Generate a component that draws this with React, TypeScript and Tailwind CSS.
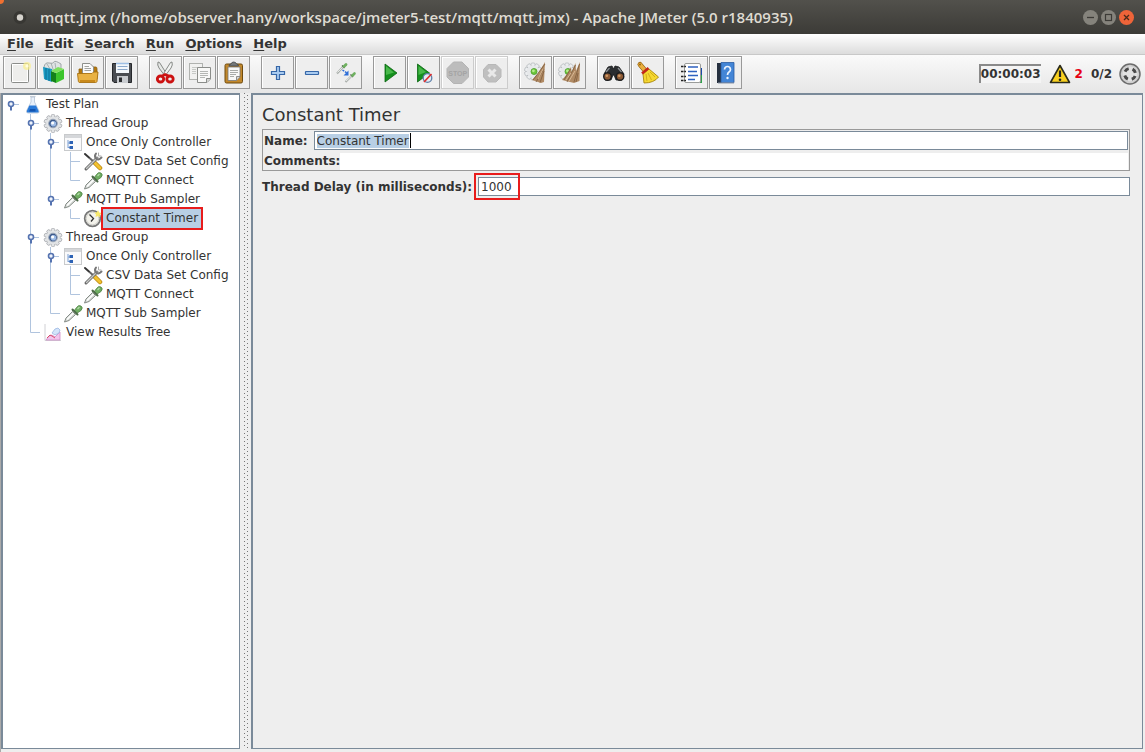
import React, { useEffect, useRef, useState } from "react";

type TreeIconName =
  | "plan"
  | "group"
  | "controller"
  | "config"
  | "dropper"
  | "timer"
  | "results";

// "line" passes through, "branch" and "end" join a leaf, the handles fold a node
type Guide = "none" | "line" | "branch" | "end" | "handle" | "handleLine" | "root";

interface TreeRow {
  id: number;
  label: string;
  icon: TreeIconName;
  guides: Guide[];
  marked?: boolean;
}

const menus = ["File", "Edit", "Search", "Run", "Options", "Help"];

const treeRows: TreeRow[] = [
  { id: 1, label: "Test Plan", icon: "plan", guides: ["root"] },
  { id: 2, label: "Thread Group", icon: "group", guides: ["none", "handleLine"] },
  { id: 3, label: "Once Only Controller", icon: "controller", guides: ["none", "line", "handleLine"] },
  { id: 4, label: "CSV Data Set Config", icon: "config", guides: ["none", "line", "line", "branch"] },
  { id: 5, label: "MQTT Connect", icon: "dropper", guides: ["none", "line", "line", "end"] },
  { id: 6, label: "MQTT Pub Sampler", icon: "dropper", guides: ["none", "line", "handle"] },
  { id: 7, label: "Constant Timer", icon: "timer", guides: ["none", "line", "none", "end"], marked: true },
  { id: 8, label: "Thread Group", icon: "group", guides: ["none", "handleLine"] },
  { id: 9, label: "Once Only Controller", icon: "controller", guides: ["none", "line", "handleLine"] },
  { id: 10, label: "CSV Data Set Config", icon: "config", guides: ["none", "line", "line", "branch"] },
  { id: 11, label: "MQTT Connect", icon: "dropper", guides: ["none", "line", "line", "end"] },
  { id: 12, label: "MQTT Sub Sampler", icon: "dropper", guides: ["none", "line", "end"] },
  { id: 13, label: "View Results Tree", icon: "results", guides: ["none", "end"] },
];

const GuideCell: React.FC<{ kind: Guide }> = ({ kind }) => {
  const hasHandle = kind === "handle" || kind === "handleLine" || kind === "root";
  return (
    <svg className="h-[19px] w-5 shrink-0" viewBox="0 0 20 19" aria-hidden="true">
      <g stroke="#b0c4de" strokeWidth="1" fill="none">
        {(kind === "line" || kind === "branch" || kind === "handleLine") && (
          <path d="M7.5 0V19" />
        )}
        {(kind === "end" || kind === "handle") && <path d="M7.5 0V9.5" />}
        {(kind === "branch" || kind === "end") && <path d="M7.5 9.5H17" />}
        {hasHandle && <path d="M10 9.5H16" />}
      </g>
      {hasHandle && (
        <g>
          <path d="M8 11V15.500" stroke="#5573b0" strokeWidth="2" />
          <circle cx="8" cy="9" r="2.5" fill="#eef3fb" stroke="#5573b0" strokeWidth="1.6" />
        </g>
      )}
    </svg>
  );
};

const Dropper = () => (
  <g>
    <path d="M1.500 18 3 14 9.500 7.500 12.500 10.500 6 16.500Z" fill="#d9ddd9" stroke="#858b86" strokeWidth="1" />
    <path d="M4 15.500 10.500 9" stroke="#fff" strokeWidth="1.400" />
    <path d="M11 7 13.500 3.500Q15.500 .5 18 2T18 6.500L13.500 9.500Z" fill="#6fae62" stroke="#4f8246" strokeWidth=".8" />
    <path d="M9.500 5.500 14.500 10.500" stroke="#4c6a47" strokeWidth="2" strokeLinecap="round" />
    <path d="M14.500 5 16.500 3" stroke="#b4dca8" strokeWidth="1.200" />
  </g>
);

const gearTeeth = [0, 36, 72, 108, 144, 180, 216, 252, 288, 324];

const treeIcons: Record<TreeIconName, React.ReactNode> = {
  plan: (
    <g>
      <path d="M8 2V7L3.500 16Q3.200 18 5 18H14.500Q16.500 18 16 16L11.500 7V2Z" fill="#e8f0fa" stroke="#b4c2d4" strokeWidth=".8" />
      <path d="M6.300 10.500 3.800 16Q3.500 17.600 5 17.600H14.500Q16 17.600 15.600 16L13 10.500Z" fill="#2a7ad8" />
      <path d="M7 14H12.500V16.500H6Z" fill="#1254b0" />
      <path d="M7 1.500H12.500" stroke="#c2cbd6" strokeWidth="1.200" />
    </g>
  ),
  group: (
    <g>
      {gearTeeth.map((deg) => (
        <rect key={deg} x="8.300" y=".5" width="3.400" height="4" rx="1" fill="#e2e4e6" stroke="#a0a3a8" strokeWidth=".7" transform={`rotate(${deg} 10 9.5)`} />
      ))}
      <circle cx="10" cy="9.500" r="6.800" fill="#e2e4e6" />
      <circle cx="10" cy="9.500" r="4.300" fill="#3d5a8c" stroke="#9aa6b8" strokeWidth="1" />
      <circle cx="10.400" cy="9.800" r="2.800" fill="#9dbbe6" />
      <circle cx="9.600" cy="9" r="1.500" fill="#fff" />
    </g>
  ),
  controller: (
    <g>
      <rect x="1.500" y="1.500" width="17" height="16" fill="#fafafb" stroke="#c8cacc" />
      <rect x="2" y="2" width="16" height="3" fill="#d5d7da" />
      <path d="M5 7V15M5 10H7M5 14.500H7" stroke="#7ba0d4" strokeWidth="1" />
      <rect x="6.500" y="8" width="3.500" height="3" fill="#2c62b5" />
      <rect x="6.500" y="13" width="3.500" height="3" fill="#2c62b5" />
    </g>
  ),
  config: (
    <g fill="none" strokeLinecap="round">
      <path d="M2 2 11 10" stroke="#666" strokeWidth="2" />
      <path d="M2 2 6 5.500" stroke="#333" strokeWidth="1.500" />
      <path d="M11.500 10.500 17 16" stroke="#b88510" strokeWidth="4.500" />
      <path d="M11.500 10.500 17 16" stroke="#f2c230" strokeWidth="3" />
      <path d="M3 17 14 6" stroke="#666" strokeWidth="3" />
      <path d="M3.500 16.500 14 6" stroke="#c8cac8" strokeWidth="1.400" />
      <path d="M13 1.500Q11 4 13 6.500T18.500 5.500" stroke="#777" strokeWidth="2" />
      <path d="M15.500 1V4H18" stroke="#aaa" strokeWidth="1" />
    </g>
  ),
  dropper: <Dropper />,
  timer: (
    <g>
      <circle cx="9.500" cy="9.500" r="7.800" fill="#f4f3ec" stroke="#777" strokeWidth="1.800" />
      <circle cx="9.500" cy="9.500" r="6.300" fill="none" stroke="#cfcfca" strokeWidth="1" />
      <path d="M6.500 5.500 10.500 9.500 8 12.500" fill="none" stroke="#333" strokeWidth="1.300" />
      <path d="M15 1 16.200 3.500 19 4 16.800 6 17 8.500 15 7 12.500 8 13 5.500 11.500 3.500 14 3.300Z" fill="#f8e86a" />
    </g>
  ),
  results: (
    <g>
      <path d="M2 1V17.500H18" fill="none" stroke="#d0d0d4" strokeWidth="1" />
      <path d="M3 17 6 13 9 12 12 14 17 9V17Z" fill="#f2c4ec" stroke="#d08ac8" strokeWidth=".8" />
      <path d="M9 10 12 6 15 5 17 7 16 10 12 12Z" fill="#d4e4fa" stroke="#9ab8e2" strokeWidth=".8" />
      <path d="M4 15 7 12 9 13 12 15" fill="none" stroke="#d8324a" strokeWidth=".8" />
    </g>
  ),
};

const Gear = () => (
  <g>
    {gearTeeth.map((deg) => (
      <rect key={deg} x="11" y="6" width="4" height="4" rx="1" fill="#eceef0" stroke="#b0b4b8" strokeWidth=".7" transform={`rotate(${deg} 13 14.500)`} />
    ))}
    <circle cx="13" cy="14.500" r="6.300" fill="#e6e8ea" />
    <circle cx="14" cy="14.500" r="3" fill="#6cc83c" stroke="#4a9a28" strokeWidth=".8" />
    <circle cx="13.400" cy="13.800" r="1.400" fill="#b4ec8c" />
  </g>
);

interface Tool {
  label: string;
  disabled?: boolean;
  icon: React.ReactNode;
}

const toolGroups: Tool[][] = [
  [
    {
      label: "New",
      icon: (
        <g>
          <rect x="7.500" y="6.500" width="17" height="19" rx="1" fill="#f6f6f5" stroke="#8b8d8a" />
          <rect x="8.500" y="7.500" width="15" height="17" fill="#eeeeec" stroke="#fff" />
          <circle cx="23" cy="9" r="4" fill="#fbf08c" opacity=".7" />
          <circle cx="23" cy="9" r="1.600" fill="#fffde0" />
        </g>
      ),
    },
    {
      label: "Templates",
      icon: (
        <g>
          <path d="M6 10Q7 5 11 6T16 5 23 7V13H7Z" fill="#dfe3e4" stroke="#8e9698" strokeWidth=".8" />
          <path d="M9 7 12 12M13 6 15 12M17 6 18 12" stroke="#9aa4a6" strokeWidth=".8" />
          <path d="M5 10 14 12V25L6 22Z" fill="#1b9bc4" />
          <path d="M8 11V23M11 12V24" stroke="#0d6f94" strokeWidth="1" />
          <path d="M13 14 18 16V26L13 24Z" fill="#14801c" />
          <path d="M18 16 26 12V22L18 26Z" fill="#3cc52c" />
          <path d="M13 14 20 10 26 12 18 16Z" fill="#7ce05c" />
        </g>
      ),
    },
    {
      label: "Open",
      icon: (
        <g>
          <path d="M7 12H11L12 10H24Q25 10 25 12V22H7Z" fill="#b3780f" stroke="#8f5f0c" strokeWidth=".8" />
          <path d="M10.500 6.500H18L21.500 10V18H10.500Z" fill="#fafafa" stroke="#8d8f8b" />
          <path d="M12.500 9.500H17M12.500 11.500H19M12.500 13.500H19" stroke="#a3a5a2" />
          <path d="M5.500 16.500H20L21.500 15H26L25 24.500Q24.800 25.500 23.500 25.500H8Q6.500 25.500 6.400 24.500Z" fill="#e9b244" stroke="#a87010" strokeWidth=".9" />
          <path d="M8 24H23" stroke="#c98a1c" strokeWidth="2" />
        </g>
      ),
    },
    {
      label: "Save",
      icon: (
        <g>
          <path d="M6.500 6.500H25.500V25.500H8L6.500 24Z" fill="#4a4d52" stroke="#26282b" />
          <rect x="10" y="6" width="13" height="10" fill="#f3f7fb" />
          <path d="M10 6.500H23" stroke="#9fc0e6" strokeWidth="1.500" />
          <path d="M11.500 9.500H21.500M11.500 12.500H21.500" stroke="#8ba9cc" />
          <rect x="11" y="19" width="11" height="7" fill="#c9ccd0" />
          <rect x="13" y="20.500" width="3" height="4.500" fill="#2b2d30" />
        </g>
      ),
    },
  ],
  [
    {
      label: "Cut",
      icon: (
        <g>
          <path d="M8 5Q7 8 9 11L15 19 17 17.500 9.500 5.500Z" fill="#e6e8e6" stroke="#7b7e7a" strokeWidth=".9" />
          <path d="M22 5Q23 8 21 11L15 19 13 17.500 20.500 5.500Z" fill="#f2f3f2" stroke="#7b7e7a" strokeWidth=".9" />
          <ellipse cx="10.500" cy="22" rx="3.200" ry="3" fill="none" stroke="#cc1111" strokeWidth="2.800" />
          <ellipse cx="20" cy="22" rx="3.200" ry="3" fill="none" stroke="#cc1111" strokeWidth="2.800" />
          <path d="M12 19 15 17.500 18.500 19" fill="none" stroke="#cc1111" strokeWidth="2.500" />
        </g>
      ),
    },
    {
      label: "Copy",
      icon: (
        <g>
          <rect x="5.500" y="6.500" width="13" height="16" fill="#f1f1f0" stroke="#b0b2af" />
          <path d="M8 10.500H16M8 12.500H12M8 14.500H12M8 16.500H12" stroke="#c7c9c6" />
          <path d="M13.500 10.500H26.500V22L23 25.500H13.500Z" fill="#f8f8f7" stroke="#8b8d8a" />
          <path d="M16 14.500H24M16 16.500H24M16 18.500H24M16 20.500H21" stroke="#b4b6b3" />
          <path d="M26.500 21.500H22.500V25.500" fill="#d3d5d2" stroke="#8b8d8a" />
        </g>
      ),
    },
    {
      label: "Paste",
      icon: (
        <g>
          <rect x="7" y="7" width="17.500" height="19" rx="1.500" fill="#c1882c" stroke="#6e4a0e" />
          <path d="M10 10H22V20L18.500 23.500H10Z" fill="#f8f8f7" stroke="#777" strokeWidth=".8" />
          <path d="M12 13.500H20M12 15.500H20M12 17.500H18M12 19.500H16" stroke="#a9aba8" />
          <path d="M22 19.500H18.500V23.500" fill="#d4d4d2" stroke="#777" strokeWidth=".8" />
          <path d="M11 9Q11 7 13 7 13.500 5 15.700 5T18.500 7Q20.500 7 20.500 9Z" fill="#74787a" stroke="#44484a" strokeWidth=".8" />
        </g>
      ),
    },
  ],
  [
    {
      label: "Expand All",
      icon: (
        <path d="M14.500 9.500H17.500V14.500H22.500V17.500H17.500V22.500H14.500V17.500H9.500V14.500H14.500Z" fill="#a9cbf0" stroke="#3667a8" strokeWidth="1.200" />
      ),
    },
    {
      label: "Collapse All",
      icon: <rect x="9.500" y="14.500" width="13" height="3" rx=".5" fill="#a9cbf0" stroke="#3667a8" strokeWidth="1.200" />,
    },
    {
      label: "Toggle",
      icon: (
        <g>
          <path d="M7 16.500 12.500 10.500" stroke="#a9aeaa" strokeWidth="2" />
          <path d="M7.500 15.500 12.500 10.500" stroke="#f6f8f6" strokeWidth=".8" />
          <path d="M12 8.500 14.500 11" stroke="#3f5a3b" strokeWidth="1.200" />
          <path d="M14 9.500 16 7.500" stroke="#6fb060" strokeWidth="2.800" strokeLinecap="round" />
          <path d="M15.500 25 21 19.500" stroke="#a9aeaa" strokeWidth="2" />
          <path d="M16 24 21 19.500" stroke="#f6f8f6" strokeWidth=".8" />
          <path d="M20.500 17.500 23 20" stroke="#3f5a3b" strokeWidth="1.200" />
          <path d="M22.500 18.500 24.500 16.500" stroke="#6fb060" strokeWidth="2.600" strokeLinecap="round" />
          <path d="M12.500 13 17 16" stroke="#2f6fd8" strokeWidth="1.500" strokeDasharray="2 1" />
          <path d="M18.500 13.500V18.500H13.500Z" fill="#2f6fd8" />
        </g>
      ),
    },
  ],
  [
    {
      label: "Start",
      icon: (
        <g>
          <path d="M11 7 23 16 11 25Z" fill="#15901d" stroke="#0b6412" strokeWidth=".8" />
          <path d="M12 9 20 15.500 12 18Z" fill="#48b84a" />
        </g>
      ),
    },
    {
      label: "Start no pauses",
      icon: (
        <g>
          <path d="M9.500 7 21.500 16 9.500 25Z" fill="#15901d" stroke="#0b6412" strokeWidth=".8" />
          <path d="M10.500 9 18 15 10.500 18Z" fill="#48b84a" />
          <circle cx="19.500" cy="21" r="4.300" fill="#e4ecf4" stroke="#5d7fa8" strokeWidth="1.300" />
          <path d="M16 25 23.500 17" stroke="#e02a2a" strokeWidth="1.600" />
        </g>
      ),
    },
    {
      label: "Stop",
      disabled: true,
      icon: (
        <g>
          <path d="M11.500 5H20L26.500 11.500V20L20 26.500H11.500L5 20V11.500Z" fill="#bcbcbc" stroke="#b4b4b4" />
          <text x="15.700" y="18.500" textAnchor="middle" fontSize="7" fontWeight="bold" fill="#a4a4a4" fontFamily="Liberation Sans, sans-serif">
            STOP
          </text>
        </g>
      ),
    },
    {
      label: "Shutdown",
      disabled: true,
      icon: (
        <g>
          <path d="M12 7.500H20L25 12.500V20L20 25H12L7.500 20V12.500Z" fill="#bfbfbf" stroke="#b8b8b8" />
          <path d="M12.500 12.500 19.500 19.500M19.500 12.500 12.500 19.500" stroke="#e8e8e8" strokeWidth="3" />
        </g>
      ),
    },
  ],
  [
    {
      label: "Clear",
      icon: (
        <g>
          <Gear />
          <path d="M25 5 24 25 21 26 12 23 18 16.500Z" fill="#b08a64" />
          <path d="M25 7 13 23M24 12 16 25M24 14 20 25.500" stroke="#7d5c3c" strokeWidth=".8" />
          <path d="M23 12 18 22" stroke="#d8b894" strokeWidth="1" />
        </g>
      ),
    },
    {
      label: "Clear All",
      icon: (
        <g>
          <Gear />
          <path d="M26 5 25.500 24 20 26 8 23 13 17 17 10 17.500 15 21.500 6 22 14Z" fill="#b08a64" />
          <path d="M25.500 7 20 25M21.500 8 13 25M16.500 12 10 23M24 16 22 25" stroke="#7d5c3c" strokeWidth=".8" />
          <path d="M21 14 15 24M17 16 12 23" stroke="#d8b894" strokeWidth="1" />
        </g>
      ),
    },
  ],
  [
    {
      label: "Search",
      icon: (
        <g>
          <path d="M6 17 10 10 14 9 15.500 12 17 9 21 10 26 17 24 23H18L16 18H15L13 23H7Z" fill="#2b2d30" stroke="#18191b" strokeWidth=".8" />
          <circle cx="9.500" cy="19.500" r="3.800" fill="#8d5a34" stroke="#1c1d1f" strokeWidth="1.400" />
          <circle cx="22" cy="19.500" r="3.800" fill="#8d5a34" stroke="#1c1d1f" strokeWidth="1.400" />
          <path d="M8 15 11.500 11M20 11 23.500 15" stroke="#8c9094" strokeWidth="1.200" />
          <circle cx="8.800" cy="18.800" r="1.300" fill="#d09a66" />
          <circle cx="21.300" cy="18.800" r="1.300" fill="#d09a66" />
        </g>
      ),
    },
    {
      label: "Reset Search",
      icon: (
        <g>
          <path d="M8 7.500 13 13.500" stroke="#8e5c08" strokeWidth="5" strokeLinecap="round" />
          <path d="M8 7.500 13 13.500" stroke="#e9b040" strokeWidth="3.600" strokeLinecap="round" />
          <circle cx="8" cy="7.500" r=".9" fill="#8e5c08" />
          <path d="M11 17 17 12 26.500 20Q22 26 12 26Z" fill="#f5d832" stroke="#a8850a" strokeWidth=".9" />
          <path d="M14 17 15 24M16 16 19.500 23M18 15 23 20" stroke="#c9a412" strokeWidth=".8" />
          <path d="M10 16.500 16.500 11" stroke="#c42818" strokeWidth="2.600" />
        </g>
      ),
    },
  ],
  [
    {
      label: "Function Helper",
      icon: (
        <g>
          <path d="M24 11H26V26H24Z" fill="#1d4aa8" />
          <path d="M24 18H26V26H24Z" fill="#2fa04a" />
          <rect x="8.500" y="6.500" width="16" height="19" rx="1.500" fill="#fff" stroke="#9a9c9a" />
          <path d="M12 10H22M12 14.500H21M12 18.500H22M12 22.500H19" stroke="#2f62c0" strokeWidth="1.300" />
          <path d="M5 9.500H10M5 14.500H10M5 19.500H10M5 23.500H10" stroke="#222" strokeWidth="1.600" strokeDasharray="2.500 .8" />
        </g>
      ),
    },
    {
      label: "Help",
      icon: (
        <g>
          <path d="M7 6H12V26H7Z" fill="#26303f" />
          <path d="M11 5.500H24V25.500H11Z" fill="#4385d6" stroke="#2a5ca2" strokeWidth=".8" />
          <path d="M8 26H24" stroke="#8a96a8" strokeWidth="1" />
          <path d="M14.500 12.500Q14.800 9.500 17.500 9.500T20.500 12.500Q20.500 14 19 15T17.500 18" fill="none" stroke="#eaf3ff" strokeWidth="1.700" />
          <circle cx="17.500" cy="21" r="1.200" fill="#eaf3ff" />
        </g>
      ),
    },
  ],
];

const TitleBar = () => (
  <header className="relative flex h-[34px] shrink-0 items-center bg-gradient-to-b from-[#52514c] to-[#3c3b37] pl-3 pr-[11px]">
    <span className="absolute left-0 top-0 h-1 w-1 rounded-br-full bg-[#f07030]" />
    <svg className="h-4 w-4 shrink-0" viewBox="0 0 16 16" aria-hidden="true">
      <circle cx="8" cy="8.500" r="6.500" fill="#383733" />
      <circle cx="8" cy="8.500" r="3.200" fill="#d6d3cd" />
    </svg>
    <h1 className="ml-3 grow truncate font-['Open_Sans',sans-serif] text-[15px] font-semibold text-[#dfdbd2]">
      mqtt.jmx (/home/observer.hany/workspace/jmeter5-test/mqtt/mqtt.jmx) - Apache JMeter (5.0 r1840935)
    </h1>
    <div className="flex gap-[3px]">
      <button type="button" aria-label="Minimize" className="h-[15px] w-[15px]">
        <svg viewBox="0 0 15 15">
          <circle cx="7.500" cy="7.500" r="7.500" fill="#85837c" />
          <path d="M4 7.500H11" stroke="#3c3b37" strokeWidth="1.300" />
        </svg>
      </button>
      <button type="button" aria-label="Maximize" className="h-[15px] w-[15px]">
        <svg viewBox="0 0 15 15">
          <circle cx="7.500" cy="7.500" r="7.500" fill="#85837c" />
          <rect x="4.500" y="4.500" width="6" height="6" fill="none" stroke="#3c3b37" strokeWidth="1.200" />
        </svg>
      </button>
      <button type="button" aria-label="Close" className="h-[15px] w-[15px]">
        <svg viewBox="0 0 15 15">
          <circle cx="7.500" cy="7.500" r="7.500" fill="#ee6439" />
          <path d="M5 5 10 10M10 5 5 10" stroke="#4a2a1a" strokeWidth="1.300" />
        </svg>
      </button>
    </div>
  </header>
);

const MenuBar = () => (
  <nav className="flex h-5 shrink-0 items-center gap-[11px] bg-gradient-to-b from-white to-[#dcdcdc] pl-[7px] text-[13px] font-bold">
    {menus.map((menu) => (
      <button key={menu} type="button" className="leading-5">
        <span className="underline underline-offset-2">{menu[0]}</span>
        {menu.slice(1)}
      </button>
    ))}
  </nav>
);

const Toolbar = () => (
  <div className="flex h-[39px] shrink-0 items-start justify-between border-t border-[#c8c8c8] bg-gradient-to-b from-[#fafafa] to-[#e6e6e6] pl-[3px] pr-1 pt-px">
    <div className="flex gap-[11px]">
      {toolGroups.map((group) => (
        <div key={group[0].label} className="flex gap-px">
          {group.map((tool) => (
            <button
              key={tool.label}
              type="button"
              title={tool.label}
              aria-label={tool.label}
              disabled={tool.disabled}
              className="h-[33px] w-[33px] border border-[#999] bg-[#eeeeee] shadow-[inset_1px_1px_0_#fff] disabled:border-[#ccc]"
            >
              <svg viewBox="0 0 31 31">{tool.icon}</svg>
            </button>
          ))}
        </div>
      ))}
    </div>
    <div className="flex h-[35px] items-center text-xs font-bold">
      <output className="h-[19px] border-l-2 border-t-2 border-[#8a8a8a] bg-[#f4f4f4] leading-4">
        00:00:03
      </output>
      <svg className="ml-2 h-5 w-[22px]" viewBox="0 0 22 20" aria-label="Warnings">
        <path d="M11 1.500 20.500 18.500H1.500Z" fill="#f8d020" stroke="#2a2a1a" strokeWidth="1.600" strokeLinejoin="round" />
        <path d="M11 6.500V13" stroke="#222" strokeWidth="2.200" />
        <circle cx="11" cy="15.800" r="1.300" fill="#222" />
      </svg>
      <span className="ml-1 text-[#e60012]">2</span>
      <span className="ml-2">0/2</span>
      <svg className="ml-[7px] h-[22px] w-[22px]" viewBox="0 0 22 22" aria-hidden="true">
        <circle cx="11" cy="11" r="10" fill="#cfcfcf" stroke="#6c6c6c" strokeWidth="1.500" />
        <circle cx="11" cy="11" r="7.500" fill="#e2e2e2" />
        <circle cx="11" cy="11" r="5.500" fill="none" stroke="#4a4a4a" strokeWidth="3" strokeDasharray="4.600 4.040" strokeDashoffset="-2" />
      </svg>
    </div>
  </div>
);

const TestTree = () => (
  <ul role="tree" aria-label="Test plan" className="w-[239px] shrink-0 overflow-hidden border-2 border-r border-b-[1px] border-[#7a8a99] bg-white">
    {treeRows.map((row) => (
      <li key={row.id} role="treeitem" aria-selected={!!row.marked} className="flex h-[19px] items-center">
        {row.guides.map((kind, index) => (
          <GuideCell key={index} kind={kind} />
        ))}
        <svg className="h-5 w-5 shrink-0" viewBox="0 0 20 20" aria-hidden="true">
          {treeIcons[row.icon]}
        </svg>
        <span className={`relative px-[3px] leading-[19px] whitespace-nowrap ${row.marked ? "bg-[#b8cfe5]" : ""}`}>
          {row.label}
          {row.marked && <span className="absolute -inset-x-[2px] -inset-y-[2px] border-2 border-[#e81c1c]" />}
        </span>
      </li>
    ))}
  </ul>
);

const Divider = () => (
  <div className="flex w-[11px] shrink-0 justify-center bg-[#eeeeee]">
    <svg className="h-full w-1" aria-hidden="true">
      <pattern id="bumps" width="4" height="4" patternUnits="userSpaceOnUse">
        <rect x="0" y="0" width="1" height="1" fill="#777" />
        <rect x="3" y="2" width="1" height="1" fill="#777" />
      </pattern>
      <rect width="4" height="100%" fill="url(#bumps)" />
    </svg>
  </div>
);

const TimerPanel = () => {
  const nameRef = useRef<HTMLInputElement>(null);
  const [name, setName] = useState("Constant Timer");
  const [comments, setComments] = useState("");
  const [delay, setDelay] = useState("1000");

  useEffect(() => {
    nameRef.current?.focus();
    nameRef.current?.select();
  }, []);

  return (
    <main className="grow border-2 border-r border-b border-[#7a8a99] bg-[#eeeeee] pl-[9px] pr-3 pt-2">
      <h2 className="text-lg leading-6">Constant Timer</h2>
      <div className="mt-[2px] border border-[#999] p-px pb-0">
        <div className="flex items-center gap-[6px]">
          <label htmlFor="name" className="font-bold">
            Name:
          </label>
          <div className="relative grow">
            <input
              id="name"
              ref={nameRef}
              value={name}
              onChange={(e) => setName(e.target.value)}
              className="block h-[19px] w-full border border-[#7a8a99] bg-white px-[2px] outline-none selection:bg-[#b8cfe5] selection:text-[#333333]"
            />
            <span className="absolute left-24 top-[2px] h-[15px] w-px bg-black" />
          </div>
        </div>
        <div className="mt-[3px] flex items-center">
          <label htmlFor="comments" className="font-bold leading-[17px]">
            Comments:
          </label>
          <input
            id="comments"
            value={comments}
            onChange={(e) => setComments(e.target.value)}
            className="h-[17px] grow bg-white px-px outline-none"
          />
        </div>
      </div>
      <div className="mt-[6px] flex items-center gap-[6px]">
        <label htmlFor="delay" className="font-bold">
          Thread Delay (in milliseconds):
        </label>
        <div className="relative grow">
          <input
            id="delay"
            value={delay}
            onChange={(e) => setDelay(e.target.value)}
            className="block h-[19px] w-full border border-[#7a8a99] bg-white px-[2px] outline-none"
          />
          <span className="pointer-events-none absolute -left-1 -top-1 h-[27px] w-[46px] border-2 border-[#e81c1c]" />
        </div>
      </div>
    </main>
  );
};

const App: React.FC = () => {
  return (
    <div className="flex h-screen flex-col bg-[#eeeeee] font-['DejaVu_Sans',sans-serif] text-xs text-[#333333]">
      <TitleBar />
      <MenuBar />
      <Toolbar />
      <div className="flex grow border-l border-[#aaa] pb-[3px] pr-[2px]">
        <TestTree />
        <Divider />
        <TimerPanel />
      </div>
    </div>
  );
};

export default App;
